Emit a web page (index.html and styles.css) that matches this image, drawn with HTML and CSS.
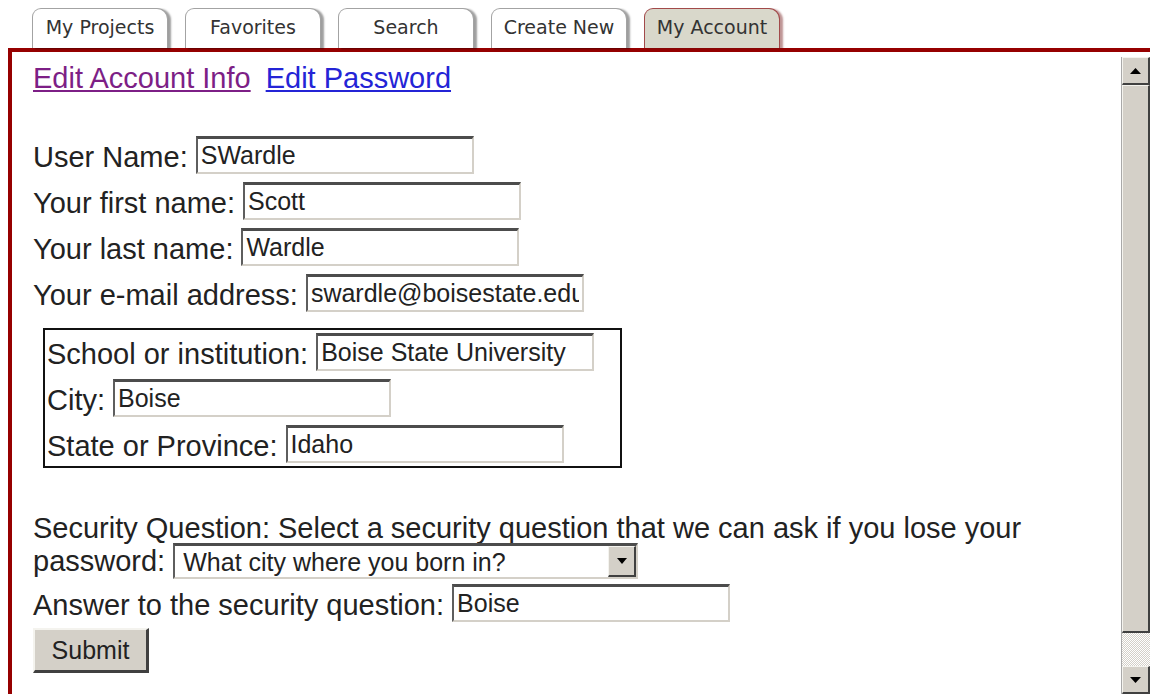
FILE: index.html
```html
<!DOCTYPE html>
<html lang="en">
<head>
<meta charset="utf-8">
<title>My Account</title>
<link rel="stylesheet" href="styles.css">
</head>
<body>
<nav class="tabs">
  <a class="tab" href="#">My Projects</a>
  <a class="tab" href="#">Favorites</a>
  <a class="tab" href="#">Search</a>
  <a class="tab" href="#">Create New</a>
  <a class="tab tab-active" href="#">My Account</a>
</nav>

<div class="frame">
  <div class="pane">
    <div class="content">
      <p class="links">
        <a class="link-visited" href="#">Edit Account Info</a>
        <a href="#">Edit Password</a>
      </p>

      <form class="account-form">
        <div class="row"><label for="username">User Name:</label><input id="username" type="text" value="SWardle"></div>
        <div class="row"><label for="first">Your first name:</label><input id="first" type="text" value="Scott"></div>
        <div class="row"><label for="last">Your last name:</label><input id="last" type="text" value="Wardle"></div>
        <div class="row row-last"><label for="email">Your e-mail address:</label><input id="email" type="text" value="swardle@boisestate.edu"></div>

        <div class="location">
          <div class="row"><label for="school">School or institution:</label><input id="school" type="text" value="Boise State University"></div>
          <div class="row"><label for="city">City:</label><input id="city" type="text" value="Boise"></div>
          <div class="row row-last"><label for="state">State or Province:</label><input id="state" type="text" value="Idaho"></div>
        </div>

        <p class="question">Security Question: Select a security question that we can ask if you lose your password: <span class="select-wrap"><select id="question"><option>What city where you born in?</option><option>What is your mother's maiden name?</option><option>What was the name of your first pet?</option></select><span class="drop"><svg width="10" height="6" viewBox="0 0 10 6"><path d="M0 0h10L5 6z" fill="#000"/></svg></span></span></p>

        <div class="row row-answer"><label for="answer">Answer to the security question:</label><input id="answer" type="text" value="Boise"></div>

        <button class="submit" type="submit">Submit</button>
      </form>
    </div>

    <div class="scrollbar">
      <div class="sb-btn"><svg width="11" height="6" viewBox="0 0 11 6"><path d="M0 6h11L5.5 0z" fill="#000"/></svg></div>
      <div class="sb-thumb"></div>
      <div class="sb-track"></div>
      <div class="sb-btn"><svg width="11" height="6" viewBox="0 0 11 6"><path d="M0 0h11L5.5 6z" fill="#000"/></svg></div>
    </div>
  </div>
</div>
</body>
</html>
```
FILE: styles.css
```css
html {
  overflow: hidden;
}

body {
  margin: 8px 0 0 8px;
  background: #fff;
  color: #222;
  font-family: "Liberation Sans", Arial, sans-serif;
}

/* ---- tab strip ---- */
.tabs {
  display: flex;
  gap: 17px;
  height: 40px;
  padding-left: 24px;
}

.tab {
  box-sizing: border-box;
  width: 136px;
  height: 40px;
  padding-top: 7px;
  border: 1px solid #a3a3a3;
  border-bottom: none;
  border-radius: 9px 11px 0 0;
  background: #fff;
  box-shadow: 3px 1px 2px rgba(0, 0, 0, 0.38);
  color: #333;
  font-family: "DejaVu Sans", Verdana, sans-serif;
  font-size: 19px;
  text-align: center;
  text-decoration: none;
}

.tab-active {
  border-color: #a24a4a;
  background: #d9d8cb;
  box-shadow: 3px 1px 2px rgba(110, 20, 20, 0.45);
}

/* ---- framed panel ---- */
.frame {
  box-sizing: border-box;
  width: 1150px;
  height: 700px;
  padding: 5px 4px 0 0;
  border: 4px solid #960000;
}

.pane {
  display: flex;
  height: 637px;
}

.content {
  flex: 1;
  padding: 5px 0 0 21px;
  font-size: 29px;
}

.links {
  display: flex;
  gap: 15px;
  margin: 0 0 41px;
}

.links a {
  color: #2424d6;
  text-decoration: underline;
}

.links .link-visited {
  color: #7d1f86;
}

/* ---- form rows ---- */
.row {
  display: flex;
  align-items: flex-end;
  gap: 8px;
  margin-bottom: 8px;
}

.row-last {
  margin-bottom: 0;
}

.row-answer {
  margin-bottom: 6px;
}

.row input,
.question select {
  box-sizing: border-box;
  border-style: solid;
  border-width: 3px 2px 2px 2px;
  border-color: #4c4c4c #d4d0c8 #d4d0c8 #5e5e5e;
  background: #fff;
  color: #222;
  font-family: "Liberation Sans", Arial, sans-serif;
  font-size: 25px;
  border-radius: 0;
  outline: none;
}

.row input {
  width: 278px;
  height: 38px;
  padding: 0 3px;
}

.location {
  box-sizing: border-box;
  width: 579px;
  margin: 16px 0 0 10px;
  padding: 3px 2px;
  border: 2px solid #111;
}

.question {
  margin: 46px 0 5px;
  line-height: 29px;
}

.select-wrap {
  position: relative;
  display: inline-block;
  line-height: normal;
}

.question select {
  appearance: none;
  -webkit-appearance: none;
  width: 465px;
  height: 36px;
  padding: 0 32px 0 8px;
}

.drop {
  position: absolute;
  top: 3px;
  right: 2px;
  bottom: 2px;
  box-sizing: border-box;
  width: 28px;
  display: flex;
  align-items: center;
  justify-content: center;
  border-style: solid;
  border-width: 1px 2px 2px 1px;
  border-color: #f4f3ee #404040 #404040 #f4f3ee;
  background: #d4d0c8;
  pointer-events: none;
}

.submit {
  box-sizing: border-box;
  width: 116px;
  height: 45px;
  padding: 0;
  border-style: solid;
  border-width: 2px 3px 3px 2px;
  border-color: #f4f3ee #404040 #404040 #f4f3ee;
  background: #d4d0c8;
  color: #222;
  font-family: "Liberation Sans", Arial, sans-serif;
  font-size: 25px;
}

/* ---- scrollbar ---- */
.scrollbar {
  display: flex;
  flex-direction: column;
  width: 28px;
  border-left: 1px solid #a9a9a9;
}

.sb-btn {
  box-sizing: border-box;
  height: 28px;
  display: flex;
  align-items: center;
  justify-content: center;
  border-style: solid;
  border-width: 1px 2px 2px 1px;
  border-color: #f4f3ee #404040 #404040 #f4f3ee;
  background: #d4d0c8;
}

.sb-thumb {
  box-sizing: border-box;
  height: 548px;
  border-style: solid;
  border-width: 1px 2px 2px 1px;
  border-color: #f4f3ee #404040 #404040 #f4f3ee;
  background: #d4d0c8;
}

.sb-track {
  flex: 1;
  background: repeating-conic-gradient(#fff 0 25%, #d4d0c8 0 50%) 0 0 / 2px 2px;
}
```
